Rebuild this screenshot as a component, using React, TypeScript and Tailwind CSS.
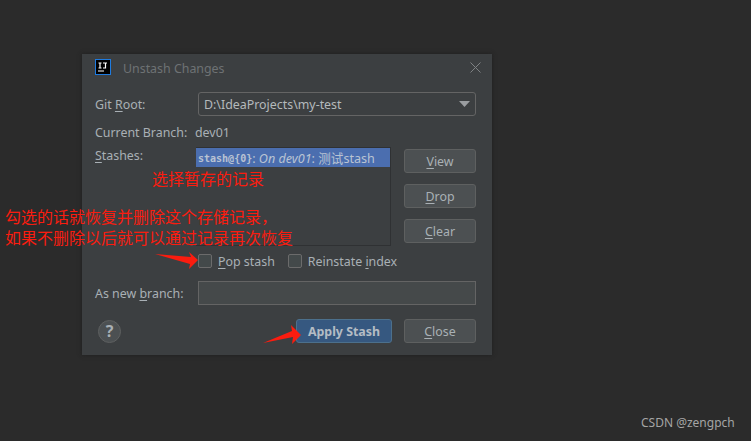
const font = { fontFamily: '"Noto Sans", "Noto Sans CJK SC", sans-serif' };

function U({ children }: { children: string }) {
  return <span className="underline underline-offset-2">{children}</span>;
}

function Btn({ children, className = "" }: { children: React.ReactNode; className?: string }) {
  return (
    <div className={`w-[72px] h-6 flex items-center justify-center rounded-[3px] border border-[#5e6060] bg-[#4c5052] pt-[2px] text-[12.4px] text-[#a9b0b5] ${className}`}>
      {children}
    </div>
  );
}

function Check({ className = "" }: { className?: string }) {
  return <div className={`w-[14px] h-[14px] rounded-[2px] border border-[#6b6b6b] bg-[#43494a] ${className}`} />;
}

function Arrow({ className, points, w, h }: { className: string; points: string; w: number; h: number }) {
  return (
    <svg className={`absolute ${className}`} width={w} height={h} viewBox={`0 0 ${w} ${h}`}>
      <polygon points={points} fill="#fb1c0f" />
    </svg>
  );
}

export default function App() {
  return (
    <div className="relative w-[751px] h-[441px] overflow-hidden bg-[#2b2b2b] pt-[54px] pl-[82px]" style={font}>
      <div className="w-[410px] h-[301px] bg-[#3c3f41] flex flex-col pl-[13px] pr-4 text-[12.4px] leading-[18px] text-[#a9b0b5] shadow-[0_0_4px_#1f1f1f]">
        <div className="h-[26px] mb-3 shrink-0 flex items-center">
          <svg width="16" height="16" viewBox="0 0 16 16" className="shrink-0">
            <rect x="0.5" y="0.5" width="15" height="15" fill="#000" stroke="#1e7be0" />
            <path d="M3.5 4H6.5M5 4V9M3.5 9H6.5M8 4H12M10.5 4V9H8M3 12H9" stroke="#fff" strokeWidth="1.2" fill="none" />
          </svg>
          <span className="ml-3 pt-[3px] text-[#6e7274]">Unstash Changes</span>
          <svg className="ml-auto -mr-[5px]" width="11" height="11" viewBox="0 0 11 11">
            <path d="M0.5 0.5L10.5 10.5M10.5 0.5L0.5 10.5" stroke="#7f8284" strokeWidth="1" fill="none" />
          </svg>
        </div>

        <div className="flex items-center h-6">
          <span className="w-[103px] pt-[2px]">Git <U>R</U>oot:</span>
          <div className="flex-1 h-6 rounded-[3px] border border-[#646464] bg-[#3c3f41] flex items-center pl-[5px] pr-[5px] text-[#b4b9bc]">
            <span className="pt-[2px]">D:\IdeaProjects\my-test</span>
            <svg className="ml-auto" width="11" height="6" viewBox="0 0 11 6"><polygon points="0,0 11,0 5.5,6" fill="#9a9da0" /></svg>
          </div>
        </div>

        <div className="flex items-center h-[18px] mt-[7px] pt-[2px]">
          <span className="w-[100px]">Current Branch:</span>
          <span>dev01</span>
        </div>

        <div className="flex mt-[6px] h-[99px]">
          <span className="w-[101px]"><U>S</U>tashes:</span>
          <div className="w-[195px] h-[99px] border-r border-b border-[#2f3133] bg-[#3c3f41]">
            <div className="h-5 bg-[#4b6eaf] flex items-center pl-[2px] pt-[2px] text-[12.6px] text-[#b9c3d3] whitespace-nowrap border-t border-[#2f3133]">
              <b className="font-bold text-[10px]" style={{ fontFamily: '"DejaVu Sans Mono", monospace' }}>stash@{"{0}"}</b>
              <span>:&nbsp;<i>On dev01</i>: 测试stash</span>
            </div>
          </div>
          <div className="ml-[13px] pt-[2px] flex flex-col gap-[11px]">
            <Btn><U>V</U>iew</Btn>
            <Btn><U>D</U>rop</Btn>
            <Btn><U>C</U>lear</Btn>
          </div>
        </div>

        <div className="flex items-center h-[18px] mt-[6px] pl-[103px]">
          <Check />
          <span className="ml-[6px] pt-[2px]"><U>P</U>op stash</span>
          <Check className="ml-[13px]" />
          <span className="ml-[6px] pt-[2px]">Reinstate <U>i</U>ndex</span>
        </div>

        <div className="flex items-center h-6 mt-[11px]">
          <span className="w-[103px] pt-[2px]">As new <U>b</U>ranch:</span>
          <div className="flex-1 h-6 border border-[#646464] bg-[#45494a]" />
        </div>

        <div className="flex items-center mt-[14px] h-6">
          <div className="ml-[3px] w-[23px] h-[23px] rounded-full bg-[#4c5052] border border-[#5e6060] flex items-center justify-center font-bold text-[16px] text-[#a9b0b5]">?</div>
          <div className="ml-auto w-[96px] h-6 flex items-center justify-center rounded-[3px] border border-[#4c708c] bg-[#365880] pt-[2px] font-bold text-[#b4bcc4]">Apply Stash</div>
          <Btn className="ml-3"><U>C</U>lose</Btn>
        </div>
      </div>

      <div className="absolute left-[152px] top-[169px] text-[16px] leading-5 text-[#fb1c0f] whitespace-nowrap">选择暂存的记录</div>
      <div className="absolute left-[5px] top-[207px] text-[16px] leading-[21px] text-[#fb1c0f] whitespace-nowrap">
        <div>勾选的话就恢复并删除这个存储记录，</div>
        <div>如果不删除以后就可以通过记录再次恢复</div>
      </div>
      <Arrow className="left-[155px] top-[252px]" w={44} h={18} points="0,2 36,5 34,0 43,8 34,17 35,12" />
      <Arrow className="left-[263px] top-[325px]" w={40} h={20} points="0,18 29,6 28,0 38,10 29,19 30,12" />

      <div className="absolute left-[641px] top-[415px] text-[12px] leading-4 text-[#a5a5a5] whitespace-nowrap">CSDN @zengpch</div>
    </div>
  );
}
